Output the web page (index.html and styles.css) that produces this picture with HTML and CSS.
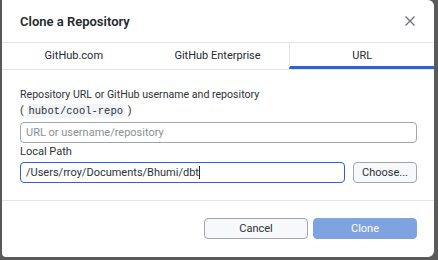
FILE: index.html
```html
<!DOCTYPE html>
<html>
<head>
<meta charset="utf-8">
<link rel="stylesheet" href="styles.css">
</head>
<body>
<div class="dialog">
  <div class="header">
    <h1 class="title">Clone a Repository</h1>
    <svg class="close" width="12" height="12" viewBox="0 0 12 12"><path d="M1.5 1.5 L10.5 10.5 M10.5 1.5 L1.5 10.5" stroke="#6a6f75" stroke-width="1.3" fill="none"/></svg>
  </div>
  <div class="tabs">
    <div class="tab">GitHub.com</div>
    <div class="tab">GitHub Enterprise</div>
    <div class="tab active">URL</div>
  </div>
  <div class="content">
    <div class="label repo-label">Repository URL or GitHub username and repository</div>
    <div class="hint">( <code class="code">hubot/cool-repo</code> )</div>
    <div class="input">URL or username/repository</div>
    <div class="label path-label">Local Path</div>
    <div class="row">
      <div class="input focused">/Users/rroy/Documents/Bhumi/dbt<span class="caret"></span></div>
      <div class="btn choose">Choose...</div>
    </div>
  </div>
  <div class="footer">
    <div class="btn cancel">Cancel</div>
    <div class="btn primary">Clone</div>
  </div>
</div>
</body>
</html>
```

FILE: styles.css
```css
* { box-sizing: border-box; }
html, body { margin: 0; padding: 0; }
body {
  background: #5a5a5a;
  width: 438px;
  height: 260px;
  overflow: hidden;
  font-family: "Roboto", "Liberation Sans", sans-serif;
  color: #24292e;
}
.dialog {
  margin-left: 2px;
  width: 432px;
  height: 257px;
  background: #fff;
  border-radius: 0 6px 6px 4px;
  display: flex;
  flex-direction: column;
}
.header {
  height: 43px;
  display: flex;
  align-items: center;
  justify-content: space-between;
  padding: 0 18px 0 18px;
  border-bottom: 1px solid #e1e4e8;
}
.title {
  margin: 0;
  font-size: 13px;
  font-weight: 600;
  color: #24292e;
}
.close { display: block; }
.tabs {
  display: flex;
  height: 27px;
  border-bottom: 1px solid #e1e4e8;
}
.tab {
  flex: 1;
  display: flex;
  align-items: center;
  justify-content: center;
  font-size: 11px;
  color: #24292e;
  padding-bottom: 1px;
}
.tab.active {
  border-left: 1px solid #e1e4e8;
  border-bottom: 3px solid #2a64d0;
  padding-bottom: 0;
  padding-top: 1px;
}
.content {
  padding: 18px 17px 0 18px;
  flex: 1;
  border-bottom: 1px solid #e1e4e8;
}
.label {
  font-size: 11px;
  line-height: 14px;
  color: #2c3137;
}
.repo-label { font-size: 10.6px; }
.hint {
  font-size: 11px;
  line-height: 16px;
  margin-top: 1px;
  color: #2c3137;
}
.code {
  font-family: "Liberation Mono", "DejaVu Sans Mono", monospace;
  font-size: 10.5px;
  background: #f1f4f8;
  padding: 1px 2px;
  border-radius: 4px;
}
.input {
  margin-top: 3px;
  height: 21px;
  border: 1px solid #a0a5ab;
  border-radius: 4px;
  font-size: 11px;
  color: #8a9096;
  display: flex;
  align-items: center;
  padding: 0 5px;
}
.path-label { margin-top: 2px; }
.row {
  display: flex;
  gap: 8px;
  margin-top: 3px;
}
.row .input {
  margin-top: 0;
  flex: 1;
  color: #2c3137;
  border: 1px solid #2a64d0;
}
.caret {
  display: inline-block;
  width: 1px;
  height: 13px;
  background: #24292e;
}
.btn {
  height: 21px;
  border: 1px solid #a0a5ab;
  border-radius: 4px;
  background: #f6f8fa;
  font-size: 11px;
  display: flex;
  align-items: center;
  justify-content: center;
  color: #2c3137;
}
.choose { width: 64px; }
.footer {
  height: 56px;
  display: flex;
  justify-content: flex-end;
  align-items: flex-start;
  gap: 5px;
  padding: 17px 17px 0 0;
}
.cancel, .primary { width: 104px; }
.primary {
  background: #7fa3e1;
  border-color: #7fa3e1;
  color: #fff;
}
```
